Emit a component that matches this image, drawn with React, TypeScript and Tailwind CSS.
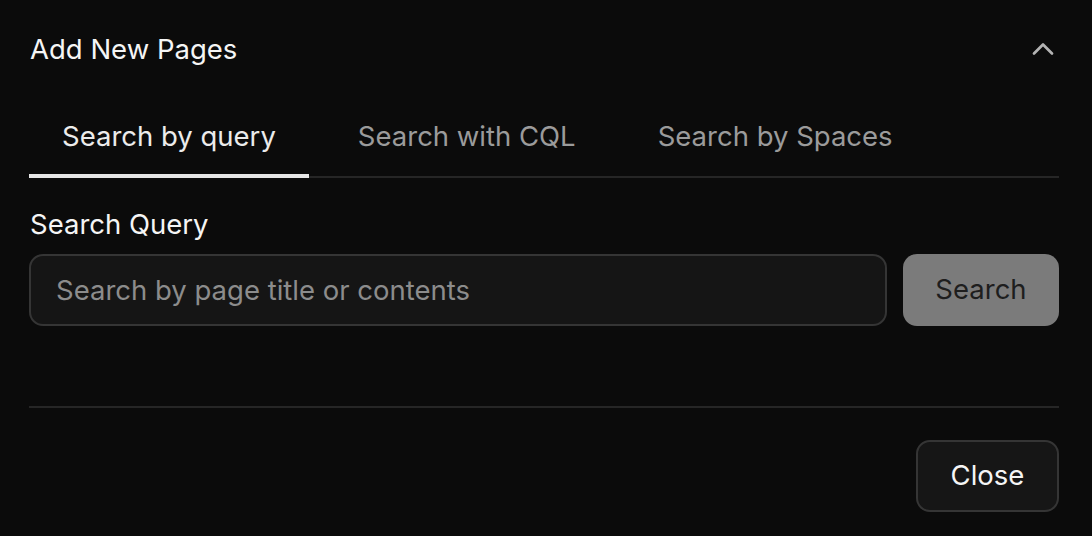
import React, { useState } from 'react'

const tabs = ['Search by query', 'Search with CQL', 'Search by Spaces']

export default function App() {
  const [active, setActive] = useState(0)
  const [query, setQuery] = useState('')

  return (
    <div
      className="w-[1092px] h-[536px] bg-[#0b0b0b] text-[#f5f5f5] pl-[29px] pr-[33px] pt-[25px]"
      style={{ fontFamily: 'Inter, "Noto Sans", sans-serif' }}
    >
      <div className="flex items-center justify-between h-[48px]">
        <h2 className="text-[27.5px] leading-[48px] pl-[1px] font-normal">Add New Pages</h2>
        <svg
          width="36"
          height="36"
          viewBox="0 0 24 24"
          fill="none"
          stroke="#b3b3b3"
          strokeWidth="1.8"
          strokeLinecap="round"
          strokeLinejoin="round"
          className="-mr-[2px]"
        >
          <path d="m18 15-6-6-6 6" />
        </svg>
      </div>

      <div className="mt-[25px] flex gap-[16px] border-b-2 border-[#262626]">
        {tabs.map((t, i) => (
          <button
            key={t}
            onClick={() => setActive(i)}
            className={
              i === active
                ? 'h-[80px] px-[33px] text-[27.5px] text-[#ececec] border-b-4 border-[#e6e6e6] -mb-[2px] pt-[2px]'
                : 'h-[80px] px-[33px] text-[27.5px] text-[#9b9b9b] border-b-4 border-transparent -mb-[2px] pt-[2px]'
            }
          >
            {t}
          </button>
        ))}
      </div>

      <div className="mt-[28px] text-[27.5px] leading-[36px] pl-[1px]">Search Query</div>
      <div className="mt-[12px] flex gap-[16px]">
        <input
          value={query}
          onChange={(e) => setQuery(e.target.value)}
          placeholder="Search by page title or contents"
          className="flex-1 h-[72px] rounded-[14px] border-2 border-[#353535] bg-[#151515] px-[25px] text-[27.5px] text-[#f5f5f5] placeholder:text-[#8c8c8c] outline-none"
        />
        <button className="w-[156px] h-[72px] rounded-[14px] bg-[#7b7b7b] text-[27.5px] text-[#1e1e1e]">
          Search
        </button>
      </div>

      <div className="mt-[80px] border-t-2 border-[#262626]" />

      <div className="mt-[32px] flex justify-end">
        <button className="w-[143px] h-[72px] rounded-[14px] border-2 border-[#353535] bg-[#161616] text-[27.5px] text-[#f5f5f5]">
          Close
        </button>
      </div>
    </div>
  )
}
